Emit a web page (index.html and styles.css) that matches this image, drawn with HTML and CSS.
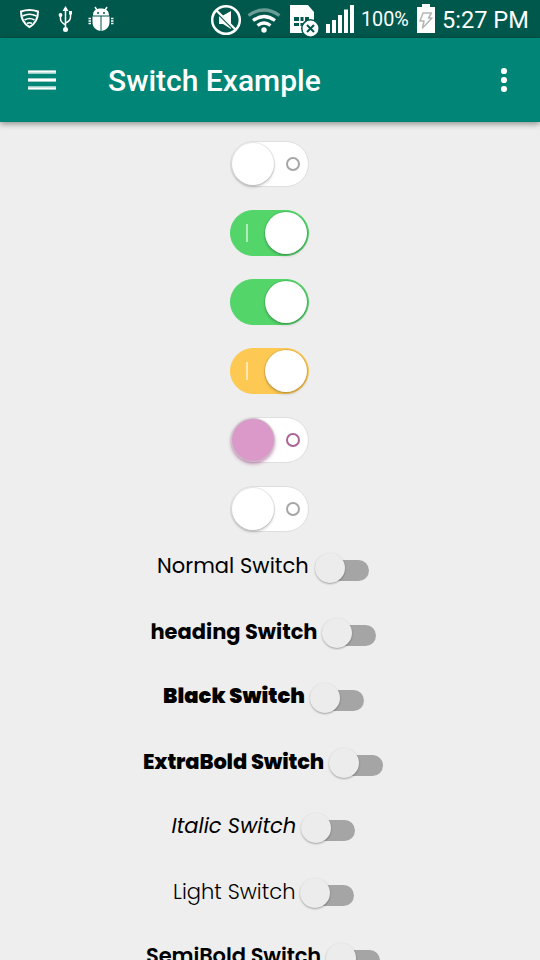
FILE: index.html
```
<!DOCTYPE html>
<html lang="en">
<head>
<meta charset="utf-8">
<title>Switch Example</title>
<link rel="stylesheet" href="styles.css">
</head>
<body>
<div class="status">
  <svg class="left-icons" width="100" height="38" viewBox="18 0 100 38" fill="none" stroke="#fff">
    <path d="M21 11.500q8.500-3 17 0c0 7-3 12.500-8.500 15.500C24 24 21 18.500 21 11.500Z" stroke-width="2"/>
    <path d="M22.500 16q7-3.500 14 0M24.500 20q5-3 10 0M27 23.500q2.500-1.500 5 0" stroke-width="1.700"/>
    <path d="M65.500 8v22M60.500 15v4q0 3 5 6M70.500 13v4q0 4-5 6" stroke-width="1.500"/>
    <path d="M65.500 6l3 5h-6zM69 11h3v3.500h-3z" fill="#fff" stroke="none"/>
    <circle cx="60.500" cy="15" r="1.900" fill="#fff" stroke="none"/><circle cx="65.500" cy="29.500" r="2.500" fill="#fff" stroke="none"/>
    <path d="M93 15.500c0-5 3-7 8-7s8 2 8 7zM92.500 16.500h8v14.500c-5-1-8-4-8-9zM101.500 16.500h8v5.500c0 5-3 8-8 9z" fill="#fff" stroke="none"/>
    <path d="M95 7l2.500 4M107 7l-2.500 4M88.500 18.500h2.500M88.500 21h2.500M88.500 23.500h2.500M111 18.500h2.500M111 21h2.500M111 23.500h2.500" stroke-width="1.500"/>
    <circle cx="98" cy="13" r="1" fill="#00574b" stroke="none"/><circle cx="104" cy="13" r="1" fill="#00574b" stroke="none"/>
  </svg>
  <svg class="right-icons" width="146" height="38" viewBox="210 0 146 38" fill="none" stroke="#fff">
    <path d="M219 15.500h4l8-4.500v18l-8-5h-4z" fill="#fff" stroke="none"/>
    <path d="M216.500 11.500l18 18" stroke="#00574b" stroke-width="3"/>
    <circle cx="226" cy="20" r="13.800" stroke-width="2.500"/><path d="M216 10l20 20" stroke-width="2.300"/>
    <g stroke-width="3.200"><path d="M248.500 15.500q15.500-11 31 0" opacity=".42"/><path d="M253 20.500q11-8 22 0M257.500 25.500q6.500-5 13 0"/></g>
    <circle cx="264" cy="30" r="2.700" fill="#fff" stroke="none"/>
    <path d="M290 5h18l6 7v21h-24z" fill="#fff" stroke="none"/>
    <path d="M294 17h5v4h-5zM300.500 17h3v4h-3zM305 17h4v4h-4zM294 23h5v3h-5zM300.500 23h3v3h-3z" fill="#00574b" stroke="none"/>
    <circle cx="310.500" cy="28.500" r="8.700" fill="#fff" stroke="#00574b" stroke-width="1.500"/>
    <path d="M307 25l7 7M314 25l-7 7" stroke="#00574b" stroke-width="2"/>
    <path d="M326 24h4v9h-4zM332 20h4v13h-4zM338 15h4v18h-4zM344 9.500h4v23.500h-4zM350 5h4v28h-4z" fill="#fff" stroke="none"/>
  </svg>
  <span class="percent">100%</span>
  <svg class="battery" width="18" height="38" viewBox="417 0 18 38"><path d="M422 4h8v3h5v26h-18V7h5z" fill="#fff"/><path d="M423 13h8.500l-3 5h3.500l-9.500 10 1.500-7h-4z" fill="none" stroke="#b5b5b5" stroke-width="1.500" stroke-linejoin="round"/></svg>
  <span class="clock">5:27 PM</span>
</div>
<header class="toolbar">
  <svg width="28" height="20" viewBox="0 0 28 20" fill="#fff"><path opacity=".6" d="M0 0h28v4H0zM0 8h28v4H0zM0 16h28v4H0z"/><path d="M0 1h28v1.500H0zM0 9h28v2H0zM0 17.500h28v1.500H0z"/></svg>
  <h1>Switch Example</h1>
  <svg class="more" width="8" height="24" viewBox="0 0 8 24" fill="#fff"><circle cx="4" cy="3" r="3.100"/><circle cx="4" cy="12" r="3.100"/><circle cx="4" cy="21" r="3.100"/></svg>
</header>
<main>
  <div class="toggles">
    <div class="toggle"><i class="knob"></i><i class="ring"></i></div>
    <div class="toggle on"><i class="bar"></i><i class="knob"></i></div>
    <div class="toggle on"><i class="knob"></i></div>
    <div class="toggle on amber"><i class="bar"></i><i class="knob"></i></div>
    <div class="toggle pink"><i class="knob"></i><i class="ring"></i></div>
    <div class="toggle"><i class="knob"></i><i class="ring"></i></div>
  </div>
  <div class="row normal"><span class="label">Normal Switch</span><span class="switch"><i class="track"></i><i class="thumb"></i></span></div>
  <div class="row heading"><span class="label">heading Switch</span><span class="switch"><i class="track"></i><i class="thumb"></i></span></div>
  <div class="row black"><span class="label">Black Switch</span><span class="switch"><i class="track"></i><i class="thumb"></i></span></div>
  <div class="row extra"><span class="label">ExtraBold Switch</span><span class="switch"><i class="track"></i><i class="thumb"></i></span></div>
  <div class="row italic"><span class="label">Italic Switch</span><span class="switch"><i class="track"></i><i class="thumb"></i></span></div>
  <div class="row light"><span class="label">Light Switch</span><span class="switch"><i class="track"></i><i class="thumb"></i></span></div>
  <div class="row semi"><span class="label">SemiBold Switch</span><span class="switch"><i class="track"></i><i class="thumb"></i></span></div>
</main>
</body>
</html>
```
FILE: styles.css
```
* { box-sizing: border-box; }
body { margin: 0; width: 540px; height: 960px; overflow: hidden; background: #eee; font-family: Roboto, sans-serif; color: #000; }
.status { display: flex; align-items: center; height: 38px; padding-left: 18px; background: #00574b; color: #fff; }
.status svg { flex: none; }
.right-icons { margin-left: 92px; }
.percent { width: 56px; margin-left: 5px; font-size: 19.8px; line-height: 38px; white-space: nowrap; padding-top: 2px; }
.clock { margin-left: 7px; font-size: 23.6px; line-height: 38px; white-space: nowrap; padding-top: 1px; }
.toolbar { position: relative; display: flex; align-items: center; height: 84px; padding: 0 32px 0 28px; background: #008577; box-shadow: 0 2px 6px rgba(0,0,0,.4); }
.toolbar h1 { margin: 2px 0 0 52px; color: #fff; font-size: 30px; font-weight: 500; line-height: 40px; white-space: nowrap; }
.more { margin-left: auto; }
.toggles { display: flex; flex-direction: column; align-items: center; gap: 23px; padding: 19px 0 11px; }
.toggle { display: flex; align-items: center; justify-content: space-between; width: 79px; height: 46px; margin-right: 1px; padding: 0 8px 0 1px; border: 1px solid #dedede; border-radius: 23px; background: #fff; }
.knob { width: 42px; height: 42px; border-radius: 50%; background: #fff; box-shadow: 0 0 0 1px rgba(0,0,0,.09), 0 2px 3px rgba(0,0,0,.2); }
.ring { width: 14px; height: 14px; border: 2px solid #a6a6a6; border-radius: 50%; }
.toggle.on { padding: 0 1px 0 15px; background: #53d56a; border-color: #53d56a; }
.on .knob { margin-left: auto; }
.bar { width: 2px; height: 18px; background: rgba(255,255,255,.55); }
.toggle.amber { background: #fec952; border-color: #fec952; }
.pink .knob { background: #da99c8; box-shadow: 0 0 0 1px #c9c3c7, 0 2px 4px #ad6798; }
.pink .ring { border-color: #a86595; }
.row { display: flex; justify-content: center; height: 65px; }
.label { width: 153px; padding: 10px 0 0 1px; font-family: Poppins, Inter, sans-serif; font-size: 21px; line-height: 26px; letter-spacing: .05px; white-space: nowrap; }
.switch { flex: none; display: grid; width: 75px; height: 65px; }
.track, .thumb { grid-area: 1 / 1; }
.track { width: 43px; height: 21px; margin: 17px 0 0 17px; border-radius: 11px; background: #a5a5a5; }
.thumb { width: 30px; height: 30px; margin: 10px 0 0 6px; border-radius: 50%; background: #ececec; box-shadow: 0 1px 2px rgba(0,0,0,.32); }
.heading .label { width: 167px; padding: 11px 0 0 1.5px; font-weight: 700; letter-spacing: -.03px; }
.black .label { width: 142px; padding-left: 1.5px; font-weight: 900; }
.extra .label { width: 181px; padding-top: 11px; font-weight: 800; letter-spacing: -.15px; }
.italic .label { width: 125px; padding-left: 1.5px; font-style: italic; letter-spacing: 0; }
.light .label { width: 123px; padding: 11px 0 0 2px; font-weight: 300; }
.semi .label { width: 175px; font-weight: 600; letter-spacing: -.1px; }
```
